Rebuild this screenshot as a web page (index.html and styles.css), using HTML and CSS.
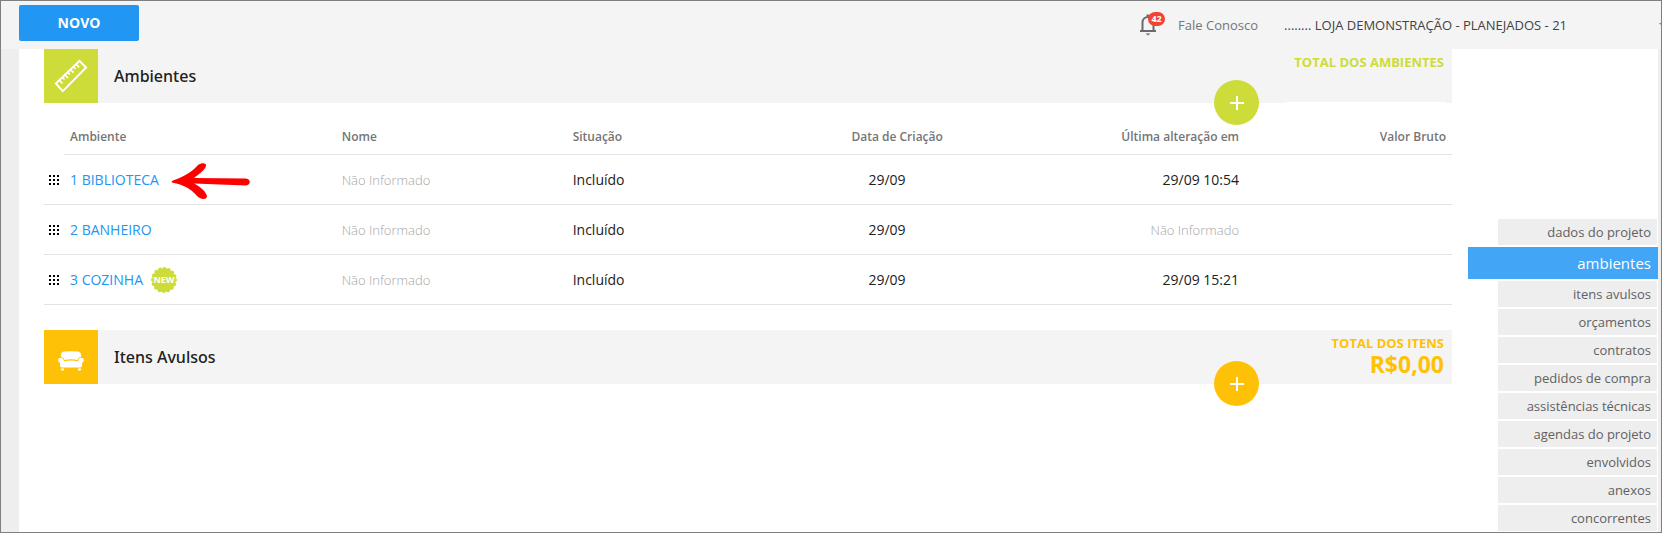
FILE: index.html
```html
<!DOCTYPE html>
<html lang="pt-BR">
<head>
<meta charset="utf-8">
<meta name="viewport" content="width=device-width, initial-scale=1">
<title>Ambientes</title>
<link rel="stylesheet" href="styles.css">
</head>
<body>
<div class="app">
  <header class="topbar">
    <button class="btn-new" type="button">NOVO</button>
    <div class="topbar-info">
      <button class="bell" type="button" aria-label="Notificações">
        <svg width="18" height="22" viewBox="0 0 18 22" fill="none" stroke="#6b6b6b" stroke-width="2"><path d="M3.5 17V8.500C3.500 5 6 3 9 3s5.500 2 5.500 5.500V17M1 17h16"/><path d="M7.500 1.500h3" /><path d="M6.500 19.500h5L9 21.500z" fill="#6b6b6b" stroke="none"/></svg>
        <span class="bell-count">42</span>
      </button>
      <a class="contact" href="#">Fale Conosco</a>
      <span class="store">........ LOJA DEMONSTRAÇÃO - PLANEJADOS - 21</span>
    </div>
  </header>

  <div class="body">
    <main class="content">
      <section class="block lime">
        <div class="block-head">
          <span class="block-icon">
            <svg width="34" height="34" viewBox="0 0 34 34" fill="none" stroke="#fff"><path d="M1.900 24.500L25.500 1.900L32.100 8.500L8.800 32.100z" stroke-width="1.900"/><path d="M5.500 21.500l3 3M8.500 18.500l2 2M11 16l3 3M13.800 13.300l2 2M16.500 10.700l3 3M19.500 8l2 2M22.200 5.300l3 3" stroke-width="1.700"/></svg>
          </span>
          <h2 class="block-title">Ambientes</h2>
          <div class="total"><span class="total-label">TOTAL DOS AMBIENTES</span></div>
          <button class="fab" type="button" aria-label="Adicionar ambiente"><svg width="14" height="14" viewBox="0 0 14 14" stroke="#fff" stroke-width="2"><path d="M7 0v14M0 7h14"/></svg></button>
        </div>
        <table class="rooms">
          <colgroup><col class="c-grip"><col class="c-room"><col class="c-name"><col class="c-status"><col class="c-date"><col class="c-changed"><col class="c-value"></colgroup>
          <thead>
            <tr><td class="blank"></td><th>Ambiente</th><th>Nome</th><th>Situação</th><th>Data de Criação</th><th class="right">Última alteração em</th><th class="right">Valor Bruto</th></tr>
          </thead>
          <tbody>
            <tr>
              <td class="grip"><svg width="10" height="10" viewBox="0 0 10 10"><path d="M0 0h2v2H0zM4 0h2v2H4zM8 0h2v2H8zM0 4h2v2H0zM4 4h2v2H4zM8 4h2v2H8zM0 8h2v2H0zM4 8h2v2H4zM8 8h2v2H8z"/></svg></td>
              <td><div class="room"><a href="#">1 BIBLIOTECA</a><svg class="arrow" width="80" height="38" viewBox="0 0 80 38"><path d="M1 19C9 16 19 12 27 3C31 0 36 1 35 4C34 8 28 12 23 16L75 16.500C80 17 80 23 75 23.500L23 21.500C28 24 34 28 36 34C36 38 30 38 26 34C20 26 9 22 1 20.500Q0 20 1 19z" fill="#f00"/></svg></div></td>
              <td class="none">Não Informado</td><td>Incluído</td><td class="date">29/09</td><td class="right">29/09 10:54</td><td></td>
            </tr>
            <tr>
              <td class="grip"><svg width="10" height="10" viewBox="0 0 10 10"><path d="M0 0h2v2H0zM4 0h2v2H4zM8 0h2v2H8zM0 4h2v2H0zM4 4h2v2H4zM8 4h2v2H8zM0 8h2v2H0zM4 8h2v2H4zM8 8h2v2H8z"/></svg></td>
              <td><div class="room"><a href="#">2 BANHEIRO</a></div></td>
              <td class="none">Não Informado</td><td>Incluído</td><td class="date">29/09</td><td class="right none">Não Informado</td><td></td>
            </tr>
            <tr>
              <td class="grip"><svg width="10" height="10" viewBox="0 0 10 10"><path d="M0 0h2v2H0zM4 0h2v2H4zM8 0h2v2H8zM0 4h2v2H0zM4 4h2v2H4zM8 4h2v2H8zM0 8h2v2H0zM4 8h2v2H4zM8 8h2v2H8z"/></svg></td>
              <td><div class="room"><a href="#">3 COZINHA</a><span class="new"><svg width="26" height="26" viewBox="0 0 26 26"><circle cx="13" cy="13" r="11.500" fill="#cddc39"/><circle cx="13" cy="13" r="11" fill="none" stroke="#cddc39" stroke-width="4" stroke-linecap="round" stroke-dasharray="0.100 4.220"/></svg><b>NEW</b></span></div></td>
              <td class="none">Não Informado</td><td>Incluído</td><td class="date">29/09</td><td class="right">29/09 15:21</td><td></td>
            </tr>
          </tbody>
        </table>
      </section>

      <section class="block amber">
        <div class="block-head">
          <span class="block-icon">
            <svg class="sofa" width="26" height="20" viewBox="0 0 26 20" fill="#fff"><path d="M3 6C2.500 2 4 0.500 7 0.500Q13 0 19 0.500C22 0.500 23.500 2 23 6C21 6 20 7.500 19.500 9Q13 7.500 6.500 9C6 7.500 5 6 3 6z"/><path d="M2.500 6.800C5 6.800 5.500 8.500 6 10.300Q13 8.600 20 10.300C20.500 8.500 21 6.800 23.500 6.800C26.500 7 26.500 11 24 12V14.500Q24 16.500 22 16.500H4Q2 16.500 2 14.500V12C-0.500 11 -0.500 7 2.500 6.800z"/><path d="M3 17.500h3v2H3zM20 17.500h3v2h-3z"/></svg>
          </span>
          <h2 class="block-title">Itens Avulsos</h2>
          <div class="total"><span class="total-label">TOTAL DOS ITENS</span><strong class="total-value">R$0,00</strong></div>
          <button class="fab" type="button" aria-label="Adicionar item"><svg width="14" height="14" viewBox="0 0 14 14" stroke="#fff" stroke-width="2"><path d="M7 0v14M0 7h14"/></svg></button>
        </div>
      </section>
    </main>

    <nav class="side">
      <a href="#">dados do projeto</a>
      <a class="active" href="#" aria-current="page">ambientes</a>
      <a href="#">itens avulsos</a>
      <a href="#">orçamentos</a>
      <a href="#">contratos</a>
      <a href="#">pedidos de compra</a>
      <a href="#">assistências técnicas</a>
      <a href="#">agendas do projeto</a>
      <a href="#">envolvidos</a>
      <a href="#">anexos</a>
      <a href="#">concorrentes</a>
    </nav>
  </div>
</div>
</body>
</html>
```
FILE: styles.css
```css
* { box-sizing: border-box; }
body { margin: 0; background: #fff; color: #212121; font: 14px/20px "Open Sans", "Noto Sans", sans-serif; }
a { color: inherit; text-decoration: none; }
button { border: 0; padding: 0; font: inherit; cursor: pointer; }
svg { display: block; }

.app { min-height: 100vh; display: flex; flex-direction: column; border: 1px solid #7f7f7f; }
.topbar { position: relative; display: flex; justify-content: space-between; align-items: flex-start; height: 48px; padding: 4px 94px 0 18px; background: #f4f4f4; }
.topbar::after { content: ""; position: absolute; right: -1px; top: 22px; border: solid transparent; border-width: 3px 0 0 3px; border-top-color: #7f7f7f; }
.btn-new { width: 120px; height: 36px; border-radius: 2px; background: #2196f3; color: #fff; font-weight: 700; }
.topbar-info { display: flex; align-items: center; height: 40px; color: #424242; font-size: 13px; }
.bell { position: relative; background: none; margin-right: 21px; }
.bell-count { position: absolute; left: 9px; top: -2px; width: 17px; height: 14px; border-radius: 7px; background: #f44336; color: #fff; font: 700 9px/14px "Open Sans", sans-serif; text-align: center; }
.contact { margin-right: 26px; color: #757575; }

.body { flex: 1; display: flex; border-left: 18px solid #eee; border-right: 3px solid #eee; }
.content { flex: 1; min-width: 0; padding-left: 25px; }
.block { margin-bottom: 25px; }
.lime { --accent: #cddc39; }
.amber { --accent: #ffc107; }
.block-head { position: relative; display: flex; height: 54px; background: #f4f4f4; }
.block-icon { display: grid; place-items: center; width: 54px; background: var(--accent); }
.sofa { margin-top: 8px; }
.block-title { flex: 1; margin: 0; padding-left: 16px; font: 500 16px/54px "Noto Sans", "Open Sans", sans-serif; }
.total { display: flex; flex-direction: column; align-items: flex-end; margin-right: 6px; padding: 4px 2px 0 9px; color: var(--accent); font-weight: 700; }
.lime .total { border-bottom: 1px solid #fff; }
.total-label { font-size: 13px; line-height: 18px; }
.total-value { font-size: 23px; line-height: 24px; font-weight: 700; }
.fab { position: absolute; right: 193px; bottom: -22px; display: grid; place-items: center; width: 45px; height: 45px; border-radius: 50%; background: var(--accent); }

.rooms { width: 100%; table-layout: fixed; border-collapse: separate; border-spacing: 0; }
.c-grip { width: 20px; }
.c-room { width: 19.3%; }
.c-name { width: 16.4%; }
.c-status { width: 19.8%; }
.c-date { width: 11%; }
.c-value { width: 14.7%; }
.rooms th, .rooms td { padding: 0 6px; border-bottom: 1px solid #e4e4e4; text-align: left; white-space: nowrap; }
.rooms th { height: 52px; padding-top: 16px; color: #757575; font-size: 12px; font-weight: 600; }
.rooms td { height: 50px; }
.rooms .blank { height: 52px; border-bottom: 0; }
.rooms .right { text-align: right; }
.rooms .none { color: #a6a6a6; font-size: 13px; font-weight: 300; }
.rooms .date { padding-left: 23px; }
.rooms .grip { padding: 0 5px; }
.room { display: flex; align-items: center; color: #2196f3; }
.arrow { margin: -8px 0 -10px 12px; }
.new { position: relative; margin: -3px 0 -3px 8px; }
.new b { position: absolute; inset: 0; color: #fff; font-size: 9px; line-height: 26px; text-align: center; }

.side { display: flex; flex-direction: column; gap: 2px; width: 206px; flex: none; padding: 170px 1px 0 16px; }
.side a { height: 26px; margin-left: 30px; padding-right: 6px; background: #eee; color: #616161; font-size: 13px; line-height: 26px; text-align: right; }
.side .active { height: 32px; margin: 0 -1px 0 0; padding-right: 7px; background: #42a5f5; color: #fff; font-size: 15px; line-height: 32px; }
```
